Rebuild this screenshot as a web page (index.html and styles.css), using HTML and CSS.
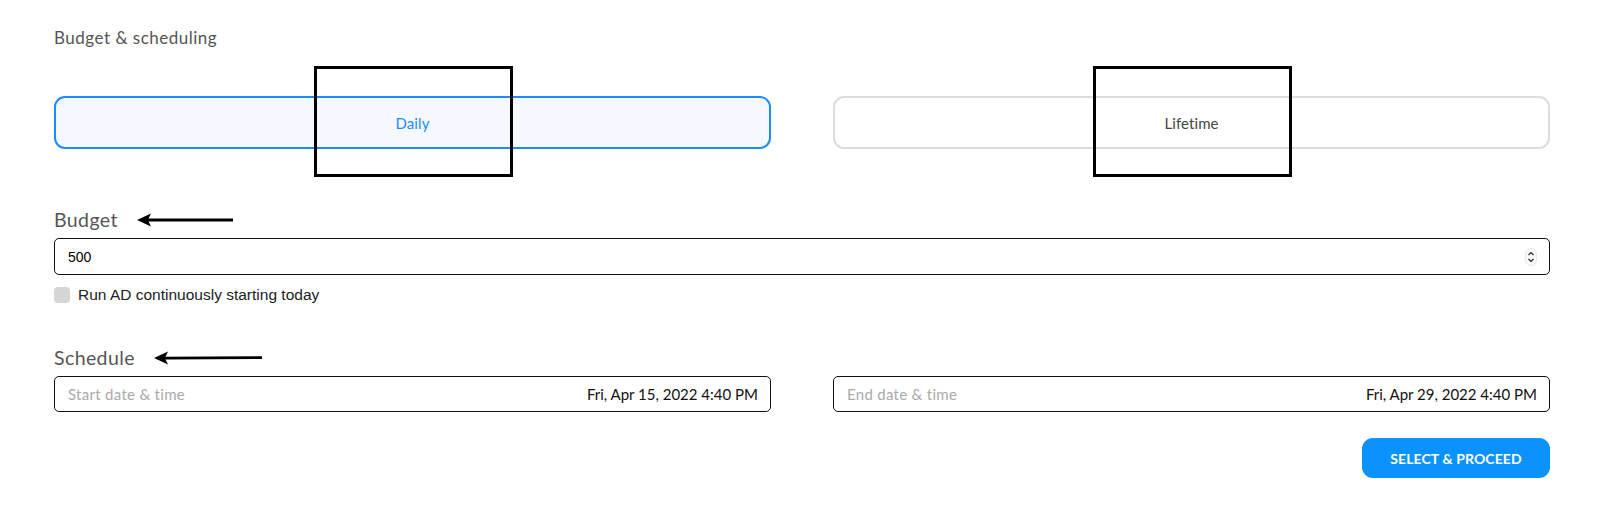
FILE: index.html
```html
<!DOCTYPE html>
<html>
<head>
<meta charset="utf-8">
<link rel="stylesheet" href="styles.css">
</head>
<body>
<div class="page">
  <h1 class="title">Budget &amp; scheduling</h1>
  <div class="toggle-row">
    <div class="toggle active">Daily<span class="mark"></span></div>
    <div class="toggle">Lifetime<span class="mark"></span></div>
  </div>

  <div class="label-row budget-label">
    <span class="label">Budget</span>
    <svg class="arrow" width="96" height="14" viewBox="0 0 96 14"><path d="M0 7 L14 0.5 L11.5 5.6 L96 5.6 L96 8.4 L11.5 8.4 L14 13.5 Z" fill="#000"/></svg>
  </div>
  <div class="input budget-input">
    <span class="value">500</span>
    <span class="spinner">
      <svg width="12" height="18" viewBox="0 0 12 18"><rect x="0.5" y="0.5" width="11" height="17" rx="5.5" fill="#fafafa" stroke="#e6e6e6"/><path d="M3.5 7 L6 4.5 L8.5 7" fill="none" stroke="#222" stroke-width="1.2"/><path d="M3.5 11 L6 13.5 L8.5 11" fill="none" stroke="#222" stroke-width="1.2"/></svg>
    </span>
  </div>
  <label class="check-row"><span class="checkbox"></span><span class="check-text">Run AD continuously starting today</span></label>

  <div class="label-row schedule-label">
    <span class="label">Schedule</span>
    <svg class="arrow" width="108" height="14" viewBox="0 0 108 14"><path d="M0 7 L14 0.5 L11.5 5.8 L108 5.2 L108 7.9 L11.5 8.4 L14 13.5 Z" fill="#000"/></svg>
  </div>
  <div class="date-row">
    <div class="input date"><span class="ph">Start date &amp; time</span><span class="dv">Fri, Apr 15, 2022 4:40 PM</span></div>
    <div class="input date"><span class="ph">End date &amp; time</span><span class="dv">Fri, Apr 29, 2022 4:40 PM</span></div>
  </div>
  <div class="actions">
    <button class="proceed">SELECT &amp; PROCEED</button>
  </div>
</div>
</body>
</html>
```
FILE: styles.css
```css
* { box-sizing: border-box; }
html, body { margin: 0; padding: 0; background: #fff; }
body { font-family: Lato, "Noto Sans", sans-serif; color: #333; }
.page { padding: 28px 50px 0 54px; }
.title { margin: 0; font-size: 17px; font-weight: 400; color: #555; line-height: 20px; letter-spacing: 0.5px; }
.toggle-row { display: grid; grid-template-columns: 1fr 1fr; column-gap: 62px; margin-top: 48px; }
.toggle { position: relative; height: 53px; border: 2px solid #ddd; border-radius: 11px; display: flex; align-items: center; justify-content: center; font-size: 15px; color: #444; background: #fff; letter-spacing: 0.1px; }
.toggle.active { border-color: #1a8cff; background: #f5f9ff; color: #1a8cff; }
.mark { position: absolute; top: -32px; left: 258px; width: 199px; height: 111px; border: 3px solid #000; }
.label-row { display: flex; align-items: center; gap: 19px; }
.budget-label { margin-top: 58px; height: 26px; }
.label { font-size: 19.5px; color: #555; line-height: 26px; letter-spacing: 0.4px; }
.arrow { display: block; }
.input { border: 1px solid #111; border-radius: 5px; background: #fff; display: flex; align-items: center; }
.budget-input { margin-top: 5px; height: 37px; padding: 0 12px 0 13px; justify-content: space-between; }
.value { font-family: "Liberation Sans", Arial, sans-serif; font-size: 14px; color: #000; }
.spinner { display: flex; }
.spinner svg { display: block; }
.check-row { display: flex; align-items: center; gap: 8px; margin-top: 11px; height: 17px; }
.checkbox { width: 16px; height: 16px; border-radius: 4px; background: #d6d6d6; }
.check-text { font-family: "Liberation Sans", Arial, sans-serif; font-size: 15.5px; line-height: 17px; color: #222; }
.schedule-label { margin-top: 42px; height: 26px; }
.date-row { display: grid; grid-template-columns: 1fr 1fr; column-gap: 62px; margin-top: 5px; }
.date { height: 36px; padding: 0 12px 0 13px; justify-content: space-between; }
.ph { font-size: 15px; color: #aaa; letter-spacing: 0.3px; }
.dv { font-size: 15px; color: #111; }
.actions { display: flex; justify-content: flex-end; margin-top: 26px; }
.proceed { width: 188px; height: 40px; border: 0; border-radius: 11px; background: #0a93ff; color: #fff; font-family: Lato, "Noto Sans", sans-serif; font-weight: 700; font-size: 14px; letter-spacing: 0.1px; }
```
